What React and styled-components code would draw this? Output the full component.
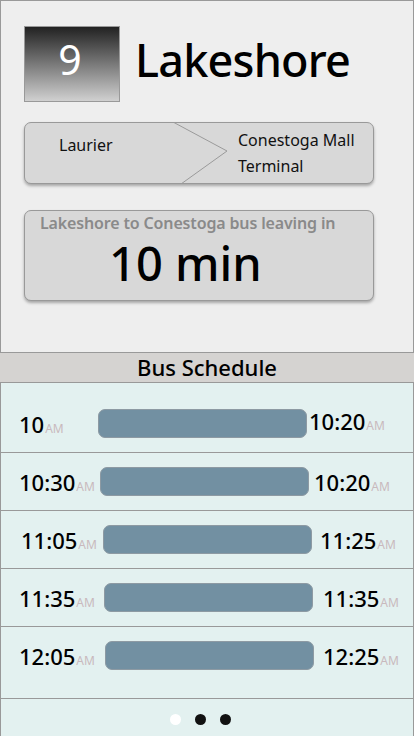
import React from "react";
import styled, { createGlobalStyle } from "styled-components";

const GlobalStyle = createGlobalStyle`
  body {
    margin: 0;
    font-family: "Noto Sans", "Open Sans", sans-serif;
    background: #ffffff;
  }
  * {
    box-sizing: border-box;
  }
`;

const Screen = styled.div`
  width: 414px;
  height: 736px;
  display: flex;
  flex-direction: column;
  overflow: hidden;
`;

const TopPanel = styled.section`
  height: 353px;
  background: #eeeeee;
  border: 1px solid #999999;
  padding: 25px 0 0 23px;
  display: flex;
  flex-direction: column;
`;

const TitleRow = styled.div`
  display: flex;
  align-items: center;
  gap: 15px;
`;

const RouteBadge = styled.div`
  width: 96px;
  height: 76px;
  border: 1px solid #999999;
  background: linear-gradient(to bottom, #222222, #d0d0d0);
  color: #ffffff;
  font-size: 41px;
  display: flex;
  align-items: center;
  justify-content: center;
  padding: 0 4px 10px 0;
`;

const RouteName = styled.h1`
  margin: 0 0 10px;
  font-size: 45px;
  font-weight: 500;
  color: #000000;
  letter-spacing: -0.8px;
`;

const Card = styled.div`
  width: 350px;
  height: ${(p) => p.h}px;
  margin-top: ${(p) => p.mt}px;
  background: #d8d8d8;
  border: 1px solid #999999;
  border-radius: 7px;
  box-shadow: 0 2px 3px rgba(0, 0, 0, 0.3);
  position: relative;
`;

const DirectionCard = styled(Card)`
  display: grid;
  grid-template-columns: 213px 1fr;
  align-items: start;
`;

const Stop = styled.div`
  font-size: 16px;
  color: #111111;
  line-height: 26px;
  padding-left: ${(p) => p.pl}px;
  padding-top: ${(p) => p.pt}px;
`;

const Chevron = styled.svg`
  position: absolute;
  left: 148px;
  top: -1px;
`;

const CountdownCard = styled(Card)`
  display: flex;
  flex-direction: column;
  align-items: flex-start;
`;

const CountdownLabel = styled.div`
  font-size: 16px;
  font-weight: 600;
  color: #8a8a8a;
  letter-spacing: -0.15px;
  padding: 1px 0 0 15px;
`;

const CountdownValue = styled.div`
  font-size: 47px;
  font-weight: 500;
  color: #000000;
  line-height: 58px;
  padding-left: 84px;
`;

const SectionHeader = styled.div`
  height: 30px;
  background: #d5d3d1;
  border-bottom: 1px solid #999999;
  display: flex;
  align-items: center;
  justify-content: center;
  font-size: 22px;
  font-weight: 500;
  color: #000000;
  padding-bottom: 1px;
`;

const Schedule = styled.section`
  flex: 1;
  background: #e3f1f0;
  border-left: 1px solid #999999;
  border-right: 1px solid #999999;
  padding-top: 12px;
  display: flex;
  flex-direction: column;
`;

const Trip = styled.div`
  height: ${(p) => (p.last ? 72 : 58)}px;
  padding-bottom: ${(p) => (p.last ? 14 : 0)}px;
  border-bottom: 1px solid #999999;
  display: flex;
  align-items: center;
  padding-left: ${(p) => p.pl}px;
`;

const Time = styled.div`
  width: ${(p) => p.w}px;
  font-size: 22px;
  font-weight: 500;
  color: #000000;
  white-space: nowrap;
  margin-top: ${(p) => p.up || 0}px;
`;

const Meridiem = styled.span`
  font-size: 12px;
  font-weight: 400;
  color: #c9b9bd;
  margin-left: 1px;
`;

const Bar = styled.div`
  width: 209px;
  height: 29px;
  background: #7290a2;
  border: 1px solid #8d9aa3;
  border-radius: 7px;
  flex-shrink: 0;
  margin-right: ${(p) => p.mr}px;
`;

const Pager = styled.div`
  flex: 1;
  display: flex;
  align-items: center;
  justify-content: center;
  gap: 14px;
  padding: 4px 14px 0 0;
`;

const Dot = styled.span`
  width: 11px;
  height: 11px;
  border-radius: 50%;
  background: ${(p) => (p.active ? "#ffffff" : "#111111")};
`;

const trips = [
  { dep: "10", arr: "10:20", pl: 18, w: 79, mr: 2, up: -6 },
  { dep: "10:30", arr: "10:20", pl: 18, w: 81, mr: 5 },
  { dep: "11:05", arr: "11:25", pl: 20, w: 82, mr: 8 },
  { dep: "11:35", arr: "11:35", pl: 18, w: 85, mr: 10 },
  { dep: "12:05", arr: "12:25", pl: 18, w: 86, mr: 9 },
];

const App = () => {
  return (
    <Screen>
      <GlobalStyle />
      <TopPanel>
        <TitleRow>
          <RouteBadge>9</RouteBadge>
          <RouteName>Lakeshore</RouteName>
        </TitleRow>
        <DirectionCard h={62} mt={20}>
          <Stop pl={34} pt={9}>
            Laurier
          </Stop>
          <Stop pl={0} pt={4}>
            Conestoga Mall
            <br />
            Terminal
          </Stop>
          <Chevron width="60" height="62" viewBox="0 0 60 62">
            <polyline
              points="0,0 54,29 8,62"
              fill="none"
              stroke="#9a9a9a"
              strokeWidth="1"
            />
          </Chevron>
        </DirectionCard>
        <CountdownCard h={91} mt={26}>
          <CountdownLabel>Lakeshore to Conestoga bus leaving in</CountdownLabel>
          <CountdownValue>10 min</CountdownValue>
        </CountdownCard>
      </TopPanel>
      <SectionHeader>Bus Schedule</SectionHeader>
      <Schedule>
        {trips.map((t, idx) => (
          <Trip key={idx} pl={t.pl} last={idx === trips.length - 1}>
            <Time w={t.w}>
              {t.dep}
              <Meridiem>AM</Meridiem>
            </Time>
            <Bar mr={t.mr} />
            <Time up={t.up}>
              {t.arr}
              <Meridiem>AM</Meridiem>
            </Time>
          </Trip>
        ))}
        <Pager>
          <Dot active />
          <Dot />
          <Dot />
        </Pager>
      </Schedule>
    </Screen>
  );
};

export default App;
